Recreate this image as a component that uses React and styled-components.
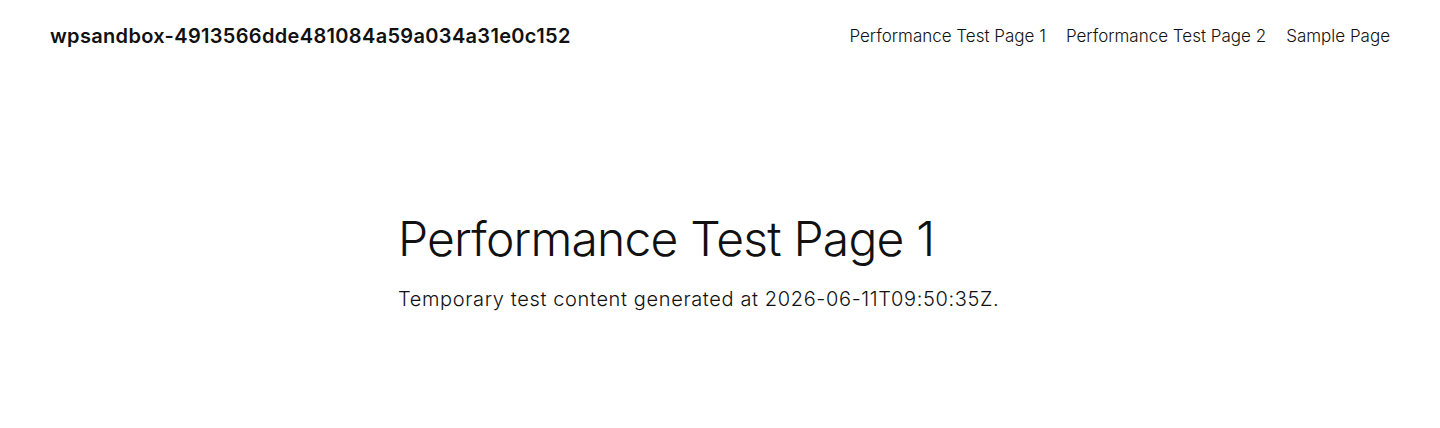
import React from "react";
import styled, { createGlobalStyle } from "styled-components";

const Global = createGlobalStyle`
  html, body { margin: 0; padding: 0; background: #ffffff; }
  body { font-family: Inter, "Noto Sans", sans-serif; color: #111111; -webkit-font-smoothing: antialiased; }
  * { box-sizing: border-box; }
`;

const Page = styled.div`
  width: 1440px;
  min-height: 428px;
  background: #fff;
`;

const Header = styled.header`
  display: flex;
  align-items: center;
  justify-content: space-between;
  height: 72px;
  padding: 0 50px;
`;

const SiteTitle = styled.a`
  font-size: 20px;
  font-weight: 600;
  color: #111111;
  text-decoration: none;
  letter-spacing: 0.33px;
`;

const Nav = styled.nav`
  display: flex;
  gap: 20px;
`;

const NavLink = styled.a`
  font-size: 17px;
  font-weight: 300;
  color: #111111;
  text-decoration: none;
  letter-spacing: 0;
`;

const Main = styled.main`
  padding: 138px 0 0 398px;
`;

const Title = styled.h1`
  margin: 0;
  font-size: 48px;
  line-height: 1.2;
  font-weight: 300;
  letter-spacing: -0.8px;
`;

const Text = styled.p`
  margin: 16px 0 0;
  font-size: 20px;
  line-height: 1.5;
  font-weight: 300;
  letter-spacing: 0.63px;
`;

export default function App() {
  return (
    <Page>
      <Global />
      <Header>
        <SiteTitle href="#">wpsandbox-4913566dde481084a59a034a31e0c152</SiteTitle>
        <Nav>
          <NavLink href="#">Performance Test Page 1</NavLink>
          <NavLink href="#">Performance Test Page 2</NavLink>
          <NavLink href="#">Sample Page</NavLink>
        </Nav>
      </Header>
      <Main>
        <Title>Performance Test Page 1</Title>
        <Text>Temporary test content generated at 2026-06-11T09:50:35Z.</Text>
      </Main>
    </Page>
  );
}
